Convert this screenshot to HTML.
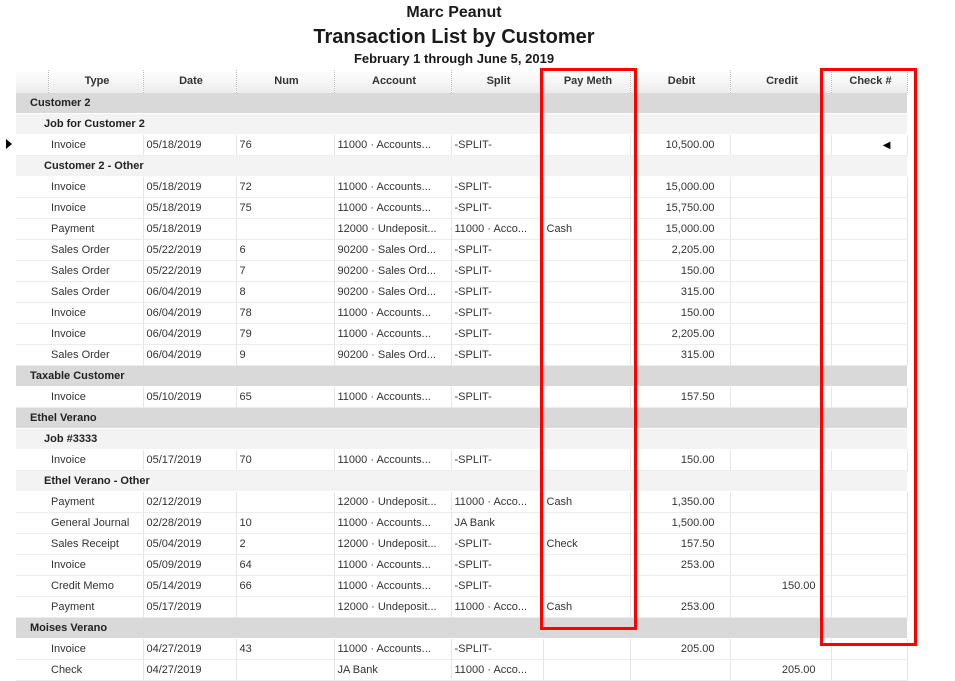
<!DOCTYPE html>
<html><head><meta charset="utf-8"><style>
body{margin:0;width:955px;height:668px;overflow:hidden;background:#fff;font-family:"Liberation Sans",Arial,sans-serif;color:#222;position:relative}
.t{position:absolute;left:0;width:908px;text-align:center;font-weight:bold;color:#1a1a1a}
table{position:absolute;left:16px;top:70px;border-collapse:collapse;table-layout:fixed;width:891px;font-size:11px}
td{height:20px;padding:0 0 0 3px;white-space:nowrap;overflow:hidden;border-right:1px solid #e6e6e6;border-bottom:1px solid #ececec;color:#333}
tr.h td{height:22px;font-weight:bold;text-align:center;background:linear-gradient(#fff,#ececec);border:none;border-right:1px dotted #bbb;color:#333;padding-bottom:1px}
tr.g0 td{background:#d9d9d9;font-weight:bold;padding-left:14px;border:none;border-bottom:1px solid #fff;color:#222}
tr.g1 td{background:#f3f3f3;font-weight:bold;padding-left:28px;border:none;border-bottom:1px solid #fff;color:#222}
td.r{text-align:right;padding-right:15px}
td.i{border-right:none}
.box{position:absolute;border:3px solid #f00}
</style></head><body>
<div class="t" style="top:4px;font-size:16px">Marc Peanut</div>
<div class="t" style="top:26px;font-size:20px">Transaction List by Customer</div>
<div class="t" style="top:51px;font-size:13px">February 1 through June 5, 2019</div>
<table>
<colgroup><col style="width:32px"><col style="width:95px"><col style="width:93px"><col style="width:98px"><col style="width:117px"><col style="width:92px"><col style="width:87px"><col style="width:100px"><col style="width:101px"><col style="width:76px"></colgroup>
<tr class="h"><td></td><td>Type</td><td>Date</td><td>Num</td><td>Account</td><td>Split</td><td>Pay Meth</td><td>Debit</td><td>Credit</td><td>Check #</td></tr>
<tr class="g0"><td colspan="10">Customer 2</td></tr>
<tr class="g1"><td colspan="10">Job for Customer 2</td></tr>
<tr><td class="i"></td><td>Invoice</td><td>05/18/2019</td><td>76</td><td>11000 · Accounts...</td><td>-SPLIT-</td><td></td><td class="r">10,500.00</td><td></td><td style="text-align:right;padding-right:16px;font-size:10px;color:#000">◀</td></tr>
<tr class="g1"><td colspan="10">Customer 2 - Other</td></tr>
<tr><td class="i"></td><td>Invoice</td><td>05/18/2019</td><td>72</td><td>11000 · Accounts...</td><td>-SPLIT-</td><td></td><td class="r">15,000.00</td><td></td><td></td></tr>
<tr><td class="i"></td><td>Invoice</td><td>05/18/2019</td><td>75</td><td>11000 · Accounts...</td><td>-SPLIT-</td><td></td><td class="r">15,750.00</td><td></td><td></td></tr>
<tr><td class="i"></td><td>Payment</td><td>05/18/2019</td><td></td><td>12000 · Undeposit...</td><td>11000 · Acco...</td><td>Cash</td><td class="r">15,000.00</td><td></td><td></td></tr>
<tr><td class="i"></td><td>Sales Order</td><td>05/22/2019</td><td>6</td><td>90200 · Sales Ord...</td><td>-SPLIT-</td><td></td><td class="r">2,205.00</td><td></td><td></td></tr>
<tr><td class="i"></td><td>Sales Order</td><td>05/22/2019</td><td>7</td><td>90200 · Sales Ord...</td><td>-SPLIT-</td><td></td><td class="r">150.00</td><td></td><td></td></tr>
<tr><td class="i"></td><td>Sales Order</td><td>06/04/2019</td><td>8</td><td>90200 · Sales Ord...</td><td>-SPLIT-</td><td></td><td class="r">315.00</td><td></td><td></td></tr>
<tr><td class="i"></td><td>Invoice</td><td>06/04/2019</td><td>78</td><td>11000 · Accounts...</td><td>-SPLIT-</td><td></td><td class="r">150.00</td><td></td><td></td></tr>
<tr><td class="i"></td><td>Invoice</td><td>06/04/2019</td><td>79</td><td>11000 · Accounts...</td><td>-SPLIT-</td><td></td><td class="r">2,205.00</td><td></td><td></td></tr>
<tr><td class="i"></td><td>Sales Order</td><td>06/04/2019</td><td>9</td><td>90200 · Sales Ord...</td><td>-SPLIT-</td><td></td><td class="r">315.00</td><td></td><td></td></tr>
<tr class="g0"><td colspan="10">Taxable Customer</td></tr>
<tr><td class="i"></td><td>Invoice</td><td>05/10/2019</td><td>65</td><td>11000 · Accounts...</td><td>-SPLIT-</td><td></td><td class="r">157.50</td><td></td><td></td></tr>
<tr class="g0"><td colspan="10">Ethel Verano</td></tr>
<tr class="g1"><td colspan="10">Job #3333</td></tr>
<tr><td class="i"></td><td>Invoice</td><td>05/17/2019</td><td>70</td><td>11000 · Accounts...</td><td>-SPLIT-</td><td></td><td class="r">150.00</td><td></td><td></td></tr>
<tr class="g1"><td colspan="10">Ethel Verano - Other</td></tr>
<tr><td class="i"></td><td>Payment</td><td>02/12/2019</td><td></td><td>12000 · Undeposit...</td><td>11000 · Acco...</td><td>Cash</td><td class="r">1,350.00</td><td></td><td></td></tr>
<tr><td class="i"></td><td>General Journal</td><td>02/28/2019</td><td>10</td><td>11000 · Accounts...</td><td>JA Bank</td><td></td><td class="r">1,500.00</td><td></td><td></td></tr>
<tr><td class="i"></td><td>Sales Receipt</td><td>05/04/2019</td><td>2</td><td>12000 · Undeposit...</td><td>-SPLIT-</td><td>Check</td><td class="r">157.50</td><td></td><td></td></tr>
<tr><td class="i"></td><td>Invoice</td><td>05/09/2019</td><td>64</td><td>11000 · Accounts...</td><td>-SPLIT-</td><td></td><td class="r">253.00</td><td></td><td></td></tr>
<tr><td class="i"></td><td>Credit Memo</td><td>05/14/2019</td><td>66</td><td>11000 · Accounts...</td><td>-SPLIT-</td><td></td><td></td><td class="r">150.00</td><td></td></tr>
<tr><td class="i"></td><td>Payment</td><td>05/17/2019</td><td></td><td>12000 · Undeposit...</td><td>11000 · Acco...</td><td>Cash</td><td class="r">253.00</td><td></td><td></td></tr>
<tr class="g0"><td colspan="10">Moises Verano</td></tr>
<tr><td class="i"></td><td>Invoice</td><td>04/27/2019</td><td>43</td><td>11000 · Accounts...</td><td>-SPLIT-</td><td></td><td class="r">205.00</td><td></td><td></td></tr>
<tr><td class="i"></td><td>Check</td><td>04/27/2019</td><td></td><td>JA Bank</td><td>11000 · Acco...</td><td></td><td></td><td class="r">205.00</td><td></td></tr>
</table>
<div style="position:absolute;left:6px;top:139px;width:0;height:0;border-top:5px solid transparent;border-bottom:5px solid transparent;border-left:6px solid #000"></div>
<div class="box" style="left:540px;top:68px;width:91px;height:556px"></div>
<div class="box" style="left:820px;top:68px;width:91px;height:572px"></div>
</body></html>
